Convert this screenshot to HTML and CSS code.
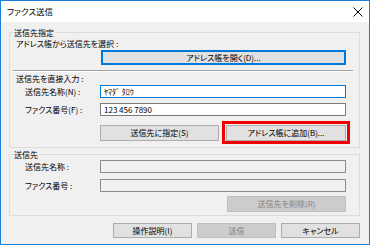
FILE: index.html
```html
<!DOCTYPE html>
<html lang="ja">
<head>
<meta charset="utf-8">
<title>ファクス送信</title>
<link rel="stylesheet" href="styles.css">
</head>
<body>
<div class="window">
  <div class="titlebar">
    <span class="title">ファクス送信</span>
    <svg class="close" width="10" height="10" viewBox="0 0 10 10"><path d="M0.5 0.5L9.5 9.5M9.5 0.5L0.5 9.5" stroke="#000" stroke-width="1" fill="none"/></svg>
  </div>
  <div class="client">
    <fieldset class="group g1">
      <legend>送信先指定</legend>
      <div class="caption">アドレス帳から送信先を選択 :</div>
      <div class="row-right open-row"><button class="btn default open">アドレス帳を開く(D)...</button></div>
      <hr class="sep">
      <div class="caption cap2">送信先を直接入力 :</div>
      <div class="field"><span class="label">送信先名称(N) :</span><div class="input focus">ﾔﾏﾀﾞ ﾀﾛｳ</div></div>
      <div class="field"><span class="label">ファクス番号(F) :</span><div class="input">123 456 7890</div></div>
      <div class="btnrow">
        <button class="btn b-set">送信先に指定(S)</button>
        <span class="hl"><button class="btn b-add">アドレス帳に追加(B)...</button></span>
      </div>
    </fieldset>
    <fieldset class="group g2">
      <legend>送信先</legend>
      <div class="field f1"><span class="label">送信先名称 :</span><div class="input disabled"></div></div>
      <div class="field f2"><span class="label">ファクス番号 :</span><div class="input disabled"></div></div>
      <div class="row-right del-row"><button class="btn off b-del">送信先を削除(R)</button></div>
    </fieldset>
    <div class="footer">
      <button class="btn foot">操作説明(I)</button>
      <button class="btn foot off">送信</button>
      <button class="btn foot">キャンセル</button>
    </div>
  </div>
</div>
</body>
</html>
```

FILE: styles.css
```css
* { box-sizing: border-box; }
html, body { margin: 0; padding: 0; }
body {
  width: 370px;
  height: 245px;
  overflow: hidden;
  font-family: "Noto Sans CJK JP", "Noto Sans", sans-serif;
  font-size: 8px;
  font-feature-settings: "palt";
  color: #000;
  background: #fff;
}
.window {
  width: 370px;
  height: 245px;
  border: 1px solid #1a7fd8;
  background: #f0f0f0;
  display: flex;
  flex-direction: column;
}
.titlebar {
  height: 21px;
  flex: none;
  background: #fff;
  display: flex;
  align-items: center;
  justify-content: space-between;
  padding: 0 6px 0 6px;
}
.title { line-height: 11px; font-size: 8.5px; }
.close { display: block; }
.client {
  flex: 1;
  display: flex;
  flex-direction: column;
  padding: 0 9px 0 8px;
}
.group {
  border: 1px solid #dcdcdc;
  margin: 0;
  padding: 0 13px 0 6px;
  min-width: 0;
}
.group legend {
  padding: 0 1px;
  margin-left: -3px;
  line-height: 11px;
}
.g1 { margin-top: 5px; padding-bottom: 6px; }
.g2 { margin-top: 1px; padding-bottom: 3px; }
.caption { line-height: 11px; }
.cap2 { margin-top: 1px; }
.row-right { display: flex; justify-content: flex-end; }
.open-row { margin-top: 1px; }
.sep {
  height: 0;
  border: 0;
  border-top: 1px solid #a0a0a0;
  border-bottom: 1px solid #fff;
  margin: 5px -7px 0 -3px;
}
.field {
  display: flex;
  align-items: center;
  height: 13px;
  margin-top: 1px;
}
.field + .field { margin-top: 5px; }
.g2 .f1 { margin-top: 0; }
.g2 .f2 { margin-top: 6px; }
.label {
  width: 84px;
  flex: none;
  padding-left: 9px;
  line-height: 11px;
}
.input {
  flex: 1;
  height: 13px;
  border: 1px solid #7a7a7a;
  background: #fff;
  padding: 0 3px;
  line-height: 11px;
  white-space: pre;
}
.input.focus { border-color: #0078d7; }
.input.disabled { background: #f0f0f0; border-color: #8c8c8c; }
.btn {
  font: inherit;
  font-feature-settings: "palt";
  height: 15px;
  line-height: 13px;
  padding: 0;
  margin: 0;
  border: 1px solid #adadad;
  background: #e1e1e1;
  color: #000;
  text-align: center;
  white-space: nowrap;
}
.btn.default {
  border-color: #0078d7;
  box-shadow: inset 0 0 0 1px #0078d7;
}
.btn.off {
  background: #cccccc;
  border-color: #bfbfbf;
  color: #838383;
}
.open { width: 245px; }
.btnrow {
  display: flex;
  gap: 7px;
  padding-left: 84px;
  margin-top: 9px;
}
.btnrow .btn { height: 16px; line-height: 14px; }
.b-set { width: 119px; }
.b-add { width: 120px; display: block; }
.hl { position: relative; display: block; }
.hl::after {
  content: "";
  position: absolute;
  left: -4px;
  right: -4px;
  top: -4px;
  bottom: -3px;
  border: 3px solid #f00000;
  pointer-events: none;
}
.del-row { margin-top: 4px; }
.b-del { width: 119px; height: 16px; line-height: 14px; }
.footer {
  display: flex;
  justify-content: flex-end;
  gap: 5px;
  margin-top: 7px;
}
.foot { width: 79px; }
```
